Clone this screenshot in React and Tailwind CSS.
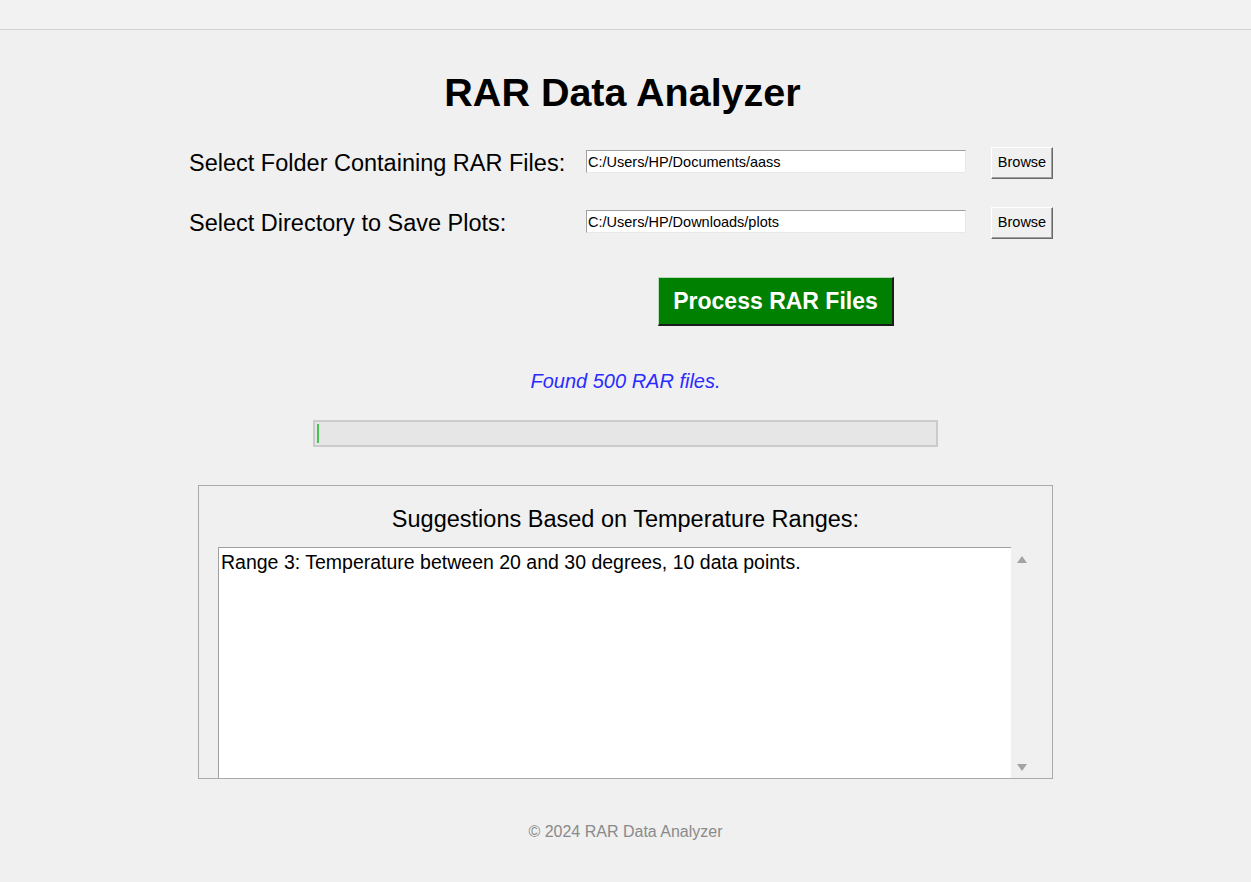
import React from "react";

const font = { fontFamily: '"Liberation Sans", Arial, sans-serif' };

function Entry({ value }) {
  return (
    <div className="mt-[3px] h-[23px] w-[380px] self-start bg-white border-t border-l border-t-[#a0a0a0] border-l-[#a0a0a0] border-r border-b border-r-[#e8e8e8] border-b-[#e8e8e8] pl-[1px] text-[14.5px] leading-[22px] text-black overflow-hidden whitespace-nowrap">
      {value}
    </div>
  );
}

function BrowseButton() {
  return (
    <button className="h-[32px] w-[62px] self-start bg-[#f0f0f0] border border-t-white border-l-white border-r-[#696969] border-b-[#696969] shadow-[inset_-1px_-1px_0_#a0a0a0] text-[14.5px] leading-none text-black">
      Browse
    </button>
  );
}

export default function App() {
  return (
    <div className="min-h-[882px] w-full bg-[#f0f0f0] text-black" style={font}>
      <div className="h-[30px] bg-[#f2f2f2] border-b border-[#d4d4d4]" />

      <h1 className="mt-[43px] pr-[6px] text-center text-[39.5px] leading-[39.5px] font-bold">
        RAR Data Analyzer
      </h1>

      <div className="mx-auto w-[873px] grid grid-cols-[372px_380px_62px] auto-rows-[32px] gap-x-[25px] gap-y-[28px] mt-[34px]">
        <div className="text-[23.5px] leading-[32px] whitespace-nowrap">
          Select Folder Containing RAR Files:
        </div>
        <Entry value="C:/Users/HP/Documents/aass" />
        <BrowseButton />

        <div className="text-[23.5px] leading-[32px] whitespace-nowrap">
          Select Directory to Save Plots:
        </div>
        <Entry value="C:/Users/HP/Downloads/plots" />
        <BrowseButton />

        <div className="col-start-2 justify-self-center mt-[10px] h-[49px]">
          <button className="h-[49px] w-[236px] bg-[#008000] border-t border-l border-t-[#b9d9b9] border-l-[#b9d9b9] border-r-2 border-b-2 border-r-[#1c1c1c] border-b-[#1c1c1c] text-white font-bold text-[23px] leading-none pt-[1px]">
            Process RAR Files
          </button>
        </div>
      </div>

      <div className="mt-[72px] text-center italic text-[20px] leading-[20px] text-[#2b2bff]">
        Found 500 RAR files.
      </div>

      <div className="mx-auto mt-[29px] h-[27px] w-[625px] bg-[#e6e6e6] border-2 border-[#cbcbcb] flex items-center pl-[2px]">
        <div className="h-[19px] w-[2px] bg-[#45c359]" />
      </div>

      <div className="mx-auto mt-[38px] h-[294px] w-[855px] border border-[#a9a9a9] overflow-hidden flex flex-col px-[19px] pt-[21px]">
        <div className="text-center text-[23.5px] leading-[24px] h-[24px] whitespace-nowrap">
          Suggestions Based on Temperature Ranges:
        </div>
        <div className="mt-[16px] flex flex-1 min-h-0">
          <div className="flex-1 bg-white border-t border-l border-[#a0a0a0] pl-[2px] pt-[3px] text-[19.5px] leading-[22px] whitespace-nowrap">
            Range 3: Temperature between 20 and 30 degrees, 10 data points.
          </div>
          <div className="w-[22px] flex flex-col items-center justify-between pt-[9px] pb-[7px]">
            <svg width="10" height="7" viewBox="0 0 10 7">
              <polygon points="5,0 10,7 0,7" fill="#a3a3a3" />
            </svg>
            <svg width="10" height="7" viewBox="0 0 10 7">
              <polygon points="0,0 10,0 5,7" fill="#a3a3a3" />
            </svg>
          </div>
        </div>
      </div>

      <div className="mt-[45px] text-center text-[16px] leading-[16px] text-[#8a8a8a]">
        © 2024 RAR Data Analyzer
      </div>
    </div>
  );
}
